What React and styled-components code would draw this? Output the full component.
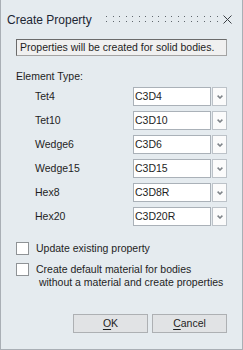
import React from "react";
import styled, { createGlobalStyle } from "styled-components";

const Global = createGlobalStyle`
  html, body { margin: 0; padding: 0; background: #e5ebef; }
  * { box-sizing: border-box; }
`;

const Frame = styled.div`
  width: 243px;
  height: 350px;
  background: #e5ebef;
  border-left: 1px solid #a9afb5;
  border-right: 1px solid #a9afb5;
  border-bottom: 1px solid #a9afb5;
  display: flex;
  flex-direction: column;
  font-family: "Liberation Sans", Arial, sans-serif;
  font-size: 10.5px;
  color: #1e1e1e;
`;

const TitleBar = styled.div`
  height: 39px;
  display: flex;
  align-items: center;
  padding-left: 6px;
`;

const Title = styled.div`
  font-size: 12px;
  line-height: 14px;
  color: #1c2633;
  width: 99px;
`;

const Grip = styled.svg`
  display: block;
`;

const Close = styled.svg`
  display: block;
  margin-left: 5px;
`;

const InfoBox = styled.div`
  margin: 0 0 0 15px;
  width: 211px;
  height: 17px;
  background: #f0f0f0;
  border: 1px solid #a3a3a3;
  border-top-color: #6b6b6b;
  border-left-color: #6b6b6b;
  padding-left: 3px;
  line-height: 15px;
  white-space: nowrap;
`;

const SectionLabel = styled.div`
  margin-top: 14px;
  padding-left: 15px;
  line-height: 13px;
`;

const Rows = styled.div`
  margin-top: 4px;
  display: flex;
  flex-direction: column;
  gap: 5px;
`;

const Row = styled.div`
  display: flex;
  align-items: center;
  height: 19px;
  padding-left: 34px;
`;

const RowLabel = styled.div`
  width: 98px;
  line-height: 13px;
`;

const ComboInput = styled.div`
  width: 78px;
  height: 19px;
  background: #ffffff;
  border: 1px solid #aab1b8;
  padding-left: 1px;
  line-height: 17px;
`;

const ComboButton = styled.div`
  width: 15px;
  height: 19px;
  margin-left: 1px;
  background: #fbfbfb;
  border: 1px solid #bcc2c8;
  display: flex;
  align-items: center;
  justify-content: center;
`;

const Checks = styled.div`
  margin-top: 16px;
  display: flex;
  flex-direction: column;
  gap: 8px;
  padding-left: 15px;
`;

const CheckRow = styled.div`
  display: flex;
  align-items: flex-start;
  gap: 7px;
`;

const Box = styled.div`
  width: 13px;
  height: 13px;
  flex: none;
  background: #ffffff;
  border: 1px solid #8f9396;
`;

const CheckText = styled.div`
  line-height: ${(p) => p.$lh}px;
`;

const Line = styled.span`
  display: block;
  white-space: pre;
`;

const Buttons = styled.div`
  margin-top: auto;
  display: flex;
  justify-content: flex-end;
  gap: 4px;
  padding: 0 15px 16px 0;
`;

const Button = styled.div`
  width: 75px;
  height: 19px;
  background: #e1e3e5;
  border: 1px solid #adb0b3;
  display: flex;
  align-items: center;
  justify-content: center;
  line-height: 13px;
  u { text-underline-offset: 2px; }
`;

const Chevron = () => (
  <svg width="6" height="4" viewBox="0 0 6 4">
    <polyline points="0.6,0.6 3,3 5.4,0.6" fill="none" stroke="#7f8489" strokeWidth="1.5" />
  </svg>
);

const GripDots = () => {
  const dots = [];
  for (let i = 0; i < 18; i++) {
    const x = Math.round(i * 6.5);
    dots.push(<rect key={`a${i}`} x={x} y={1} width="1" height="1" fill="#5f666c" />);
    dots.push(<rect key={`b${i}`} x={x} y={6} width="1" height="1" fill="#5f666c" />);
  }
  return (
    <Grip width="112" height="9" viewBox="0 0 112 9">
      {dots}
    </Grip>
  );
};

const rows = [
  ["Tet4", "C3D4"],
  ["Tet10", "C3D10"],
  ["Wedge6", "C3D6"],
  ["Wedge15", "C3D15"],
  ["Hex8", "C3D8R"],
  ["Hex20", "C3D20R"],
];

export default function App() {
  return (
    <>
      <Global />
      <Frame>
        <TitleBar>
          <Title>Create Property</Title>
          <GripDots />
          <Close width="9" height="9" viewBox="0 0 9 9">
            <line x1="0.5" y1="0.5" x2="8.5" y2="8.5" stroke="#3a3f44" strokeWidth="1" />
            <line x1="8.5" y1="0.5" x2="0.5" y2="8.5" stroke="#3a3f44" strokeWidth="1" />
          </Close>
        </TitleBar>
        <InfoBox>Properties will be created for solid bodies.</InfoBox>
        <SectionLabel>Element Type:</SectionLabel>
        <Rows>
          {rows.map(([label, value]) => (
            <Row key={label}>
              <RowLabel>{label}</RowLabel>
              <ComboInput>{value}</ComboInput>
              <ComboButton>
                <Chevron />
              </ComboButton>
            </Row>
          ))}
        </Rows>
        <Checks>
          <CheckRow>
            <Box />
            <CheckText $lh={13}>Update existing property</CheckText>
          </CheckRow>
          <CheckRow>
            <Box />
            <CheckText $lh={12.5}>
              <Line>Create default material for bodies</Line>
              <Line> without a material and create properties</Line>
            </CheckText>
          </CheckRow>
        </Checks>
        <Buttons>
          <Button>
            <span><u>O</u>K</span>
          </Button>
          <Button>
            <span><u>C</u>ancel</span>
          </Button>
        </Buttons>
      </Frame>
    </>
  );
}
